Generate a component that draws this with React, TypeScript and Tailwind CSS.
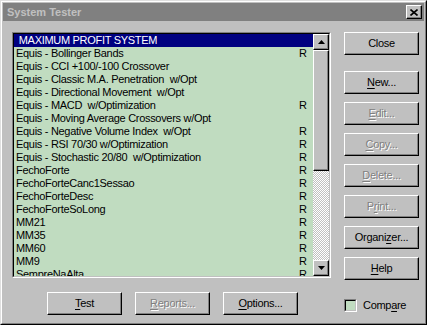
import React from "react"

type Item = { name: string; r?: boolean }

const items: Item[] = [
  { name: " MAXIMUM PROFIT SYSTEM" },
  { name: "Equis - Bollinger Bands", r: true },
  { name: "Equis - CCI +100/-100 Crossover" },
  { name: "Equis - Classic M.A. Penetration  w/Opt" },
  { name: "Equis - Directional Movement  w/Opt" },
  { name: "Equis - MACD  w/Optimization", r: true },
  { name: "Equis - Moving Average Crossovers w/Opt" },
  { name: "Equis - Negative Volume Index  w/Opt", r: true },
  { name: "Equis - RSI 70/30 w/Optimization", r: true },
  { name: "Equis - Stochastic 20/80  w/Optimization", r: true },
  { name: "FechoForte", r: true },
  { name: "FechoForteCanc1Sessao", r: true },
  { name: "FechoForteDesc", r: true },
  { name: "FechoForteSoLong", r: true },
  { name: "MM21", r: true },
  { name: "MM35", r: true },
  { name: "MM60", r: true },
  { name: "MM9", r: true },
  { name: "SempreNaAlta", r: true },
]

// raised 3D edge used by buttons and scrollbar parts
const raised =
  "border border-t-white border-l-white border-r-black border-b-black shadow-[inset_-1px_-1px_#808080] bg-[#c0c0c0]"

function Btn({
  label,
  u,
  disabled,
  className = "",
}: {
  label: string
  u?: number
  disabled?: boolean
  className?: string
}) {
  const chars = label.split("")
  return (
    <div
      className={`${raised} h-[23px] w-[75px] flex items-center justify-center ${
        disabled ? "text-[#808080] [text-shadow:1px_1px_0_#fff]" : "text-black"
      } ${className}`}
    >
      <span className="whitespace-pre">
        {chars.map((c, i) =>
          i === u ? (
            <span key={i} className="underline underline-offset-[2px]">
              {c}
            </span>
          ) : (
            <span key={i}>{c}</span>
          )
        )}
      </span>
    </div>
  )
}

function Arrow({ down }: { down?: boolean }) {
  return (
    <div className={`${raised} h-[16px] w-[16px] flex items-center justify-center`}>
      <svg width="7" height="4" viewBox="0 0 7 4">
        {down ? (
          <path d="M0 0h7L3.5 4z" fill="#000" />
        ) : (
          <path d="M0 4h7L3.5 0z" fill="#000" />
        )}
      </svg>
    </div>
  )
}

export default function App() {
  return (
    <div
      className="w-[427px] h-[325px] bg-[#c0c0c0] border border-t-[#dfdfdf] border-l-[#dfdfdf] border-r-black border-b-black text-[11px] tracking-[-0.3px] overflow-hidden"
      style={{ fontFamily: '"Liberation Sans", Arial, sans-serif' }}
    >
      <div className="h-full border border-t-white border-l-white border-r-[#808080] border-b-[#808080] p-px">
        {/* Title bar */}
        <div className="h-[18px] bg-[#808080] flex items-center justify-between pl-[4px] pr-[2px]">
          <span className="font-bold text-[#c0c0c0] tracking-normal">System Tester</span>
          <div className={`${raised} h-[14px] w-[16px] flex items-center justify-center`}>
            <svg width="8" height="7" viewBox="0 0 8 7">
              <path d="M0.5 0.5L7.5 6.5M7.5 0.5L0.5 6.5" stroke="#000" strokeWidth="1.6" />
            </svg>
          </div>
        </div>

        <div className="flex pl-[9px] pt-[11px]">
          {/* Left column */}
          <div className="w-[319px]">
            <div className="h-[246px] border border-t-[#808080] border-l-[#808080] border-r-white border-b-white">
              <div className="h-full border border-t-black border-l-black border-r-[#c0c0c0] border-b-[#c0c0c0] bg-[#c0dcc0] flex">
                <div className="flex-1 overflow-hidden">
                  {items.map((it, i) => (
                    <div
                      key={i}
                      className={`h-[13px] leading-[13px] grid grid-cols-[1fr_14px] pl-[2px] ${
                        i === 0 ? "bg-[#000080] text-white" : "text-black"
                      }`}
                    >
                      <span className="whitespace-pre overflow-hidden">{it.name}</span>
                      <span>{it.r ? "R" : ""}</span>
                    </div>
                  ))}
                </div>
                {/* Scrollbar */}
                <div className="w-[16px] flex flex-col bg-[repeating-conic-gradient(#fff_0_25%,#c0c0c0_0_50%)] bg-[length:2px_2px]">
                  <Arrow />
                  <div className={`${raised} h-[121px] w-[16px]`} />
                  <div className="flex-1" />
                  <Arrow down />
                </div>
              </div>
            </div>

            <div className="flex gap-[13px] pl-[35px] mt-[14px]">
              <Btn label="Test" u={0} className="w-[74px]" />
              <Btn label="Reports..." u={0} disabled className="w-[74px]" />
              <Btn label="Options..." u={0} className="w-[74px]" />
            </div>
          </div>

          {/* Right column */}
          <div className="ml-[13px] flex flex-col">
            <Btn label="Close" />
            <div className="mt-[16px] flex flex-col gap-[8px]">
              <Btn label="New..." u={0} />
              <Btn label="Edit..." u={0} disabled />
              <Btn label="Copy..." u={0} disabled />
              <Btn label="Delete..." u={0} disabled />
              <Btn label="Print..." u={1} disabled />
              <Btn label="Organizer..." u={6} />
              <Btn label="Help" u={0} />
            </div>
            <div className="mt-[17px] flex items-center">
              <div className="w-[13px] h-[13px] border border-t-[#808080] border-l-[#808080] border-r-white border-b-white">
                <div className="h-full border border-t-black border-l-black border-r-[#c0c0c0] border-b-[#c0c0c0] bg-[#c0dcc0]" />
              </div>
              <span className="ml-[6px]">
                Comp<span className="underline underline-offset-[2px]">a</span>re
              </span>
            </div>
          </div>
        </div>
      </div>
    </div>
  )
}
